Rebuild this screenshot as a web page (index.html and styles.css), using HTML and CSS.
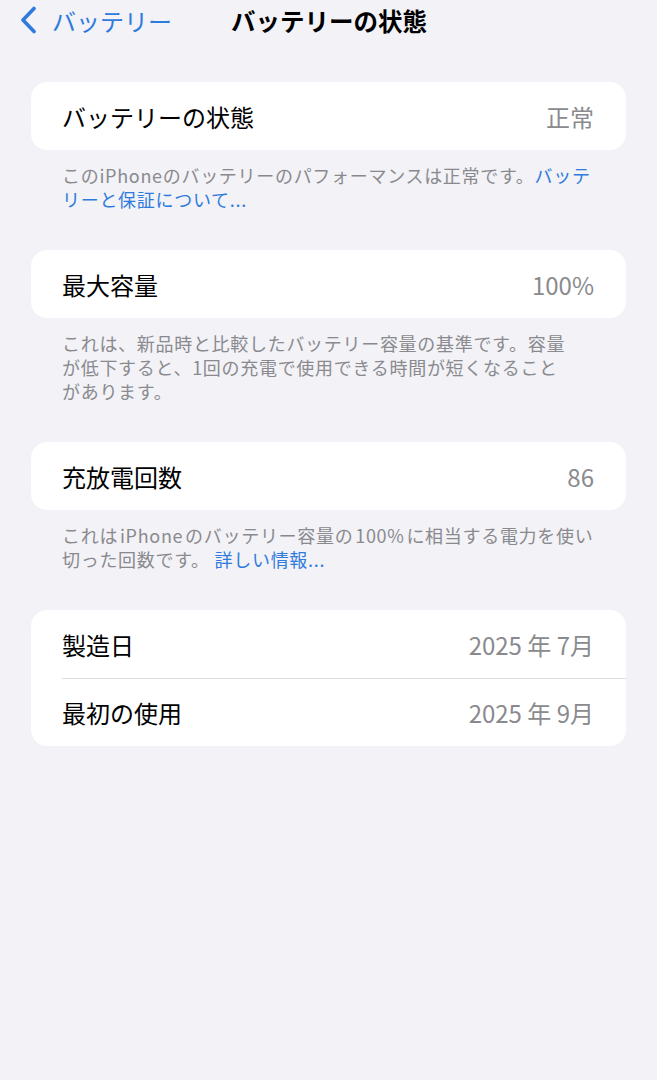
FILE: index.html
```html
<!DOCTYPE html>
<html lang="ja">
<head>
  <meta charset="UTF-8">
  <meta name="viewport" content="width=device-width, initial-scale=1.0">
  <title>バッテリーの状態</title>
  <link rel="stylesheet" href="styles.css">
</head>
<body>
  <!-- ナビゲーションバー -->
  <div class="navbar">
    <a class="back" href="#">
      <svg class="chevron" width="20" height="28" viewBox="0 0 20 28">
        <path d="M16 2.5 L5 14 L16 25.5" fill="none" stroke="#2f7bdc" stroke-width="3.6" stroke-linecap="round" stroke-linejoin="round"/>
      </svg>
      <span>バッテリー</span>
    </a>
    <div class="nav-title">バッテリーの状態</div>
  </div>

  <div class="content">
    <div class="group">
      <div class="row">
        <span class="label">バッテリーの状態</span>
        <span class="value">正常</span>
      </div>
    </div>
    <p class="footnote">このiPhoneのバッテリーのパフォーマンスは正常です。<a href="#">バッテ<br>リーと保証について...</a></p>

    <div class="group">
      <div class="row">
        <span class="label">最大容量</span>
        <span class="value">100%</span>
      </div>
    </div>
    <p class="footnote">これは、新品時と比較したバッテリー容量の基準です。容量<br>が低下すると、1回の充電で使用できる時間が短くなること<br>があります。</p>

    <div class="group">
      <div class="row">
        <span class="label">充放電回数</span>
        <span class="value">86</span>
      </div>
    </div>
    <p class="footnote">これは&#8202;iPhone&#8202;のバッテリー容量の&#8202;100%&#8202;に相当する電力を使い<br>切った回数です。 <a href="#">詳しい情報...</a></p>

    <div class="group">
      <div class="row">
        <span class="label">製造日</span>
        <span class="value">2025 年 7月</span>
      </div>
      <div class="row">
        <span class="label">最初の使用</span>
        <span class="value">2025 年 9月</span>
      </div>
    </div>
  </div>
</body>
</html>
```

FILE: styles.css
```css
body {
  margin: 0;
  background-color: #f2f2f7;
  font-family: "Noto Sans CJK JP", "Noto Sans", sans-serif;
  color: #000;
}
a {
  color: #2f7bdc;
  text-decoration: none;
}

/* ナビゲーションバー */
.navbar {
  height: 40px;
  display: flex;
  align-items: center;
}
.back {
  display: flex;
  align-items: center;
  padding-left: 18px;
  font-size: 24px;
  gap: 14px;
}
.chevron {
  display: block;
}
.nav-title {
  margin-left: 59px;
  font-size: 24.5px;
  font-weight: bold;
}

.content {
  padding: 42px 31px 0 31px;
}

/* 白いカード */
.group {
  background-color: #fff;
  border-radius: 16px;
  overflow: hidden;
}
.row {
  height: 68px;
  display: flex;
  align-items: center;
  justify-content: space-between;
  padding: 0 32px 0 31px;
  font-size: 24px;
  position: relative;
}
.row + .row::before {
  content: "";
  position: absolute;
  top: 0;
  left: 31px;
  right: 0;
  border-top: 1px solid #dedee2;
}
.value {
  color: #8a8a8e;
}

/* カード下の説明 */
.footnote {
  margin: 0;
  padding: 13px 31px 39px 31px;
  font-size: 18px;
  letter-spacing: 0.7px;
  line-height: 24px;
  white-space: nowrap;
  color: #8a8a8e;
}
```
